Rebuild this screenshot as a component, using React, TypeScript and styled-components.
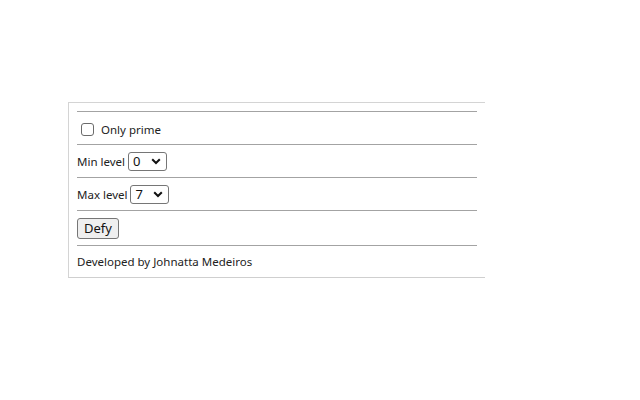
import React from "react";
import styled, { createGlobalStyle } from "styled-components";

const GlobalStyle = createGlobalStyle`
  html, body {
    margin: 0;
    background: #ffffff;
  }
  body {
    font-family: "Noto Sans", "Open Sans", sans-serif;
    font-size: 11.5px;
    color: #222222;
  }
`;

const Page = styled.div`
  padding: 102px 0 0 68px;
`;

const Panel = styled.div`
  width: 417px;
  border-top: 1px solid #d4d4d4;
  border-left: 1px solid #d4d4d4;
  border-bottom: 1px solid #cfcfcf;
  padding: 8px 0 0 8px;
  box-sizing: border-box;
`;

const Rule = styled.hr`
  width: 400px;
  margin: 0;
  border: none;
  border-top: 1px solid #a3a3a3;
  height: 0;
`;

const Row = styled.div<{ $h: number }>`
  height: ${(p) => p.$h}px;
  display: flex;
  align-items: center;
  gap: 3px;
`;

const CheckLabel = styled.label`
  display: flex;
  align-items: center;
  gap: 7px;
  padding-left: 4px;
  padding-top: 3px;
`;

const Box = styled.span`
  width: 13px;
  height: 13px;
  border: 1px solid #6b6b6b;
  border-radius: 3px;
  box-sizing: border-box;
  background: #fff;
`;

const SelectWrap = styled.span`
  position: relative;
  display: inline-flex;
  align-items: center;
  width: 39px;
  height: 19px;
  border: 1px solid #767676;
  border-radius: 3px;
  box-sizing: border-box;
  padding-left: 4px;
  font-size: 13px;
  color: #111;
`;

const Chevron = styled.svg`
  position: absolute;
  right: 5px;
  top: 5px;
`;

const Button = styled.button`
  font-family: inherit;
  font-size: 13px;
  height: 21px;
  padding: 0 6px;
  border: 1px solid #767676;
  border-radius: 3px;
  background: #efefef;
  color: #111;
  line-height: 1;
`;

const Credit = styled.div`
  height: 31px;
  display: flex;
  align-items: center;
`;

const LevelSelect: React.FC<{ value: string }> = ({ value }) => (
  <SelectWrap>
    {value}
    <Chevron width="10" height="7" viewBox="0 0 10 7">
      <path d="M1.2 1.2 L5 5 L8.8 1.2" fill="none" stroke="#111" strokeWidth="2" />
    </Chevron>
  </SelectWrap>
);

export default function App() {
  return (
    <>
      <GlobalStyle />
      <Page>
        <Panel>
          <Rule />
          <Row $h={32}>
            <CheckLabel>
              <Box />
              Only prime
            </CheckLabel>
          </Row>
          <Rule />
          <Row $h={32}>
            Min level <LevelSelect value="0" />
          </Row>
          <Rule />
          <Row $h={32}>
            Max level <LevelSelect value="7" />
          </Row>
          <Rule />
          <Row $h={34}>
            <Button>Defy</Button>
          </Row>
          <Rule />
          <Credit>Developed by Johnatta Medeiros</Credit>
        </Panel>
      </Page>
    </>
  );
}
